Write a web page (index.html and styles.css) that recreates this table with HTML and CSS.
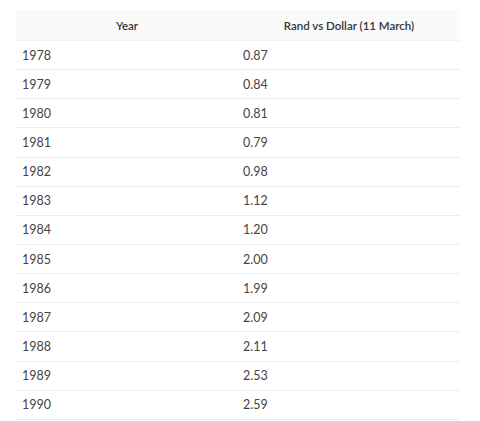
FILE: index.html
```
<!DOCTYPE html>
<html>
<head>
<meta charset="utf-8">
<link rel="stylesheet" href="styles.css">
</head>
<body>
<table class="rates">
<thead>
<tr><th>Year</th><th>Rand vs Dollar (11 March)</th></tr>
</thead>
<tbody>
<tr><td>1978</td><td>0.87</td></tr>
<tr><td>1979</td><td>0.84</td></tr>
<tr><td>1980</td><td>0.81</td></tr>
<tr><td>1981</td><td>0.79</td></tr>
<tr><td>1982</td><td>0.98</td></tr>
<tr><td>1983</td><td>1.12</td></tr>
<tr><td>1984</td><td>1.20</td></tr>
<tr><td>1985</td><td>2.00</td></tr>
<tr><td>1986</td><td>1.99</td></tr>
<tr><td>1987</td><td>2.09</td></tr>
<tr><td>1988</td><td>2.11</td></tr>
<tr><td>1989</td><td>2.53</td></tr>
<tr><td>1990</td><td>2.59</td></tr>
</tbody>
</table>
</body>
</html>
```
FILE: styles.css
```
html, body {
  margin: 0;
  padding: 0;
  background: #ffffff;
}
body {
  padding: 10px 20px 0 16px;
  font-family: Lato, "Open Sans", sans-serif;
  color: #444444;
}
.rates {
  width: 444px;
  border-collapse: collapse;
  table-layout: fixed;
  font-size: 12.5px;
}
.rates th {
  background: #fafafa;
  height: 30px;
  padding: 0 6px;
  font-size: 11.5px;
  font-weight: 600;
  color: #333333;
  text-align: center;
  border-bottom: 1px solid #f2f2f2;
}
.rates td {
  height: 28.15px;
  padding: 0 6px;
  text-align: left;
  border-bottom: 1px solid #ececec;
}
.rates td + td {
  padding-left: 5px;
}
```
